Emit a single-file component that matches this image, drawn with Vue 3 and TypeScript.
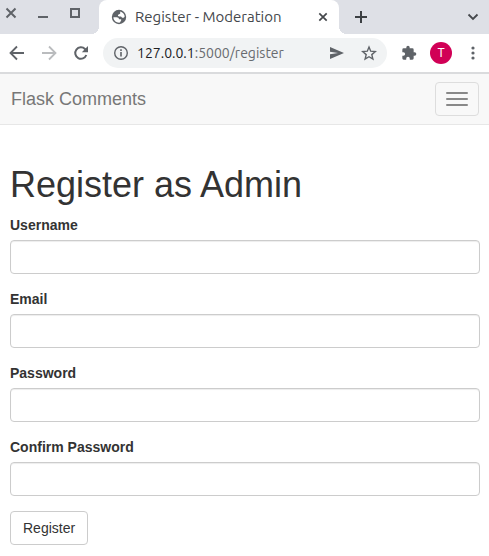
<script setup lang="ts">
import { reactive } from 'vue'

interface Field {
  id: 'username' | 'email' | 'password' | 'confirm'
  label: string
  type: string
}

const fields: Field[] = [
  { id: 'username', label: 'Username', type: 'text' },
  { id: 'email', label: 'Email', type: 'text' },
  { id: 'password', label: 'Password', type: 'password' },
  { id: 'confirm', label: 'Confirm Password', type: 'password' },
]

const form = reactive({ username: '', email: '', password: '', confirm: '' })
</script>

<template>
  <div class="browser">
    <header class="chrome">
      <div class="tab-strip">
        <div class="window-controls">
          <button class="icon-button" type="button">
            <svg width="12" height="12" viewBox="0 0 12 12"><path d="M1.5 1.5l9 9M10.5 1.5l-9 9" stroke="#5f6368" stroke-width="2" /></svg>
          </button>
          <button class="icon-button" type="button">
            <svg width="12" height="12" viewBox="0 0 12 12"><path d="M1 10h10" stroke="#5f6368" stroke-width="2" /></svg>
          </button>
          <button class="icon-button" type="button">
            <svg width="12" height="12" viewBox="0 0 12 12"><path d="M2 2h8v8H2z" fill="none" stroke="#5f6368" stroke-width="2" /></svg>
          </button>
        </div>
        <div class="tab">
          <svg width="16" height="16" viewBox="0 0 16 16">
            <circle cx="8" cy="8" r="7.2" fill="#5f6368" />
            <path d="M9.2 2.4c2.400.5 4.200 2.500 4.500 4.900-.3 1-1 1.500-1.800 1.500-1.200 0-1.300-1-2.100-1.300-.9-.3-2.200.2-2.700-.5-.5-.8.2-1.500 1-1.700.9-.2 1.200-.6 1.100-1.300z" fill="#fff" />
            <path d="M2.400 8.200h3.300c1.300 0 2.300.9 2.300 2.100h1.600c.6 0 .8.5.6 1l-1.200 2.300c-3.400.5-6.500-2-6.600-5.400z" fill="#fff" />
          </svg>
          <span class="tab-title">Register - Moderation</span>
          <button class="icon-button" type="button">
            <svg width="12" height="12" viewBox="0 0 12 12"><path d="M2.3 2.3l7.4 7.4M9.7 2.3l-7.4 7.4" stroke="#45484c" stroke-width="1.7" /></svg>
          </button>
        </div>
        <button class="icon-button new-tab" type="button">
          <svg width="14" height="14" viewBox="0 0 14 14"><path d="M7 1v12M1 7h12" stroke="#3c4043" stroke-width="2" /></svg>
        </button>
        <button class="icon-button tab-search" type="button">
          <svg width="12" height="12" viewBox="0 0 12 12"><path d="M1.5 3.5L6 8l4.500-4.500" fill="none" stroke="#45484c" stroke-width="1.8" /></svg>
        </button>
      </div>

      <div class="toolbar">
        <nav class="history">
          <button class="icon-button" type="button">
            <svg width="16" height="16" viewBox="0 0 16 16"><path d="M15 8H2.500M8 1.500L1.500 8 8 14.500" fill="none" stroke="#5f6368" stroke-width="1.800" /></svg>
          </button>
          <button class="icon-button" type="button">
            <svg width="16" height="16" viewBox="0 0 16 16"><path d="M1 8h12.500M8 1.500L14.500 8 8 14.500" fill="none" stroke="#babcbe" stroke-width="1.800" /></svg>
          </button>
          <button class="icon-button" type="button">
            <svg width="16" height="16" viewBox="0 0 16 16"><path d="M13.300 10A5.700 5.700 0 1 1 12 4l1.500 1.500" fill="none" stroke="#5f6368" stroke-width="2" /><path d="M15 1v6.200H8.800z" fill="#5f6368" /></svg>
          </button>
        </nav>
        <div class="address">
          <svg width="16" height="16" viewBox="0 0 16 16">
            <circle cx="8" cy="8" r="6.300" fill="none" stroke="#5f6368" stroke-width="1.400" />
            <path d="M8 7v4.500M8 4.300v1.600" stroke="#5f6368" stroke-width="1.600" />
          </svg>
          <span class="url"><span class="host">127.0.0.1</span>:5000/register</span>
          <button class="icon-button" type="button">
            <svg width="16" height="16" viewBox="0 0 16 16"><path d="M1 2l14 6-14 6V9.300L9 8 1 6.700z" fill="#5f6368" /></svg>
          </button>
          <button class="icon-button" type="button">
            <svg width="16" height="16" viewBox="0 0 16 16"><path d="M8 2l1.700 4.200 4.600.4-3.500 3 1.100 4.500L8 11.700l-3.900 2.400 1.100-4.500-3.500-3 4.600-.4z" fill="none" stroke="#5f6368" stroke-width="1.400" /></svg>
          </button>
        </div>
        <div class="actions">
          <button class="icon-button" type="button">
            <svg width="16" height="16" viewBox="0 0 24 24"><path d="M20.500 11H19V7a2 2 0 0 0-2-2h-4V3.500a2.500 2.500 0 0 0-5 0V5H4a2 2 0 0 0-2 2v3.800h1.500a2.700 2.700 0 0 1 0 5.400H2V20a2 2 0 0 0 2 2h3.800v-1.500a2.700 2.700 0 0 1 5.400 0V22H17a2 2 0 0 0 2-2v-4h1.500a2.500 2.500 0 0 0 0-5z" fill="#5f6368" /></svg>
          </button>
          <button class="avatar" type="button">T</button>
          <button class="icon-button" type="button">
            <svg width="16" height="16" viewBox="0 0 16 16" fill="#5f6368"><circle cx="8" cy="3" r="1.600" /><circle cx="8" cy="8" r="1.600" /><circle cx="8" cy="13" r="1.600" /></svg>
          </button>
        </div>
      </div>
    </header>

    <div class="navbar">
      <a class="brand" href="#">Flask Comments</a>
      <button class="menu-toggle" type="button">
        <span class="bar"></span>
        <span class="bar"></span>
        <span class="bar"></span>
      </button>
    </div>

    <main class="page">
      <h1>Register as Admin</h1>
      <form @submit.prevent>
        <div v-for="field in fields" :key="field.id" class="form-group">
          <label :for="field.id">{{ field.label }}</label>
          <input :id="field.id" v-model="form[field.id]" :type="field.type" />
        </div>
        <button class="submit" type="submit">Register</button>
      </form>
    </main>
  </div>
</template>

<style>
body {
  margin: 0;
  background: #fff;
}
</style>

<style scoped>
* {
  box-sizing: border-box;
}

.browser {
  color: #333;
  font: 14px/20px "Liberation Sans", Arial, sans-serif;
}

button {
  font: inherit;
}

svg {
  display: block;
  flex: none;
}

.icon-button {
  padding: 0;
  border: 0;
  background: none;
}

.chrome {
  border-bottom: 2px solid #dadbdd;
  font-family: Ubuntu, "Noto Sans", sans-serif;
}

.tab-strip {
  display: flex;
  align-items: center;
  height: 34px;
  padding-right: 10px;
  background: #dee0e6;
}

.window-controls {
  display: flex;
  flex: none;
  gap: 20px;
  width: 99px;
  height: 34px;
  padding: 7px 0 0 5px;
  align-items: flex-start;
}

.tab {
  position: relative;
  display: flex;
  flex: 0 1 240px;
  align-items: center;
  gap: 8px;
  height: 34px;
  padding: 0 10px 0 12px;
  border-radius: 8px 8px 0 0;
  background: #fff;
}

.tab::before,
.tab::after {
  content: "";
  position: absolute;
  bottom: 0;
  width: 8px;
  height: 8px;
}

.tab::before {
  right: 100%;
  background: radial-gradient(circle at 0 0, #dee0e6 8px, #fff 8px);
}

.tab::after {
  left: 100%;
  background: radial-gradient(circle at 100% 0, #dee0e6 8px, #fff 8px);
}

.tab-title {
  flex: 1;
  overflow: hidden;
  color: #45484c;
  font-size: 15px;
  white-space: nowrap;
}

.new-tab {
  margin-left: 15px;
}

.tab-search {
  margin-left: auto;
}

.toolbar {
  display: flex;
  align-items: center;
  height: 38px;
  padding: 0 8px 0 9px;
}

.history {
  display: flex;
  gap: 16px;
  margin-right: 14px;
}

.address {
  display: flex;
  flex: 1;
  align-items: center;
  gap: 16px;
  height: 30px;
  padding: 0 10px;
  border-radius: 15px;
  background: #f1f3f4;
}

.url {
  flex: 1;
  margin-left: -8px;
  color: #686b6f;
  font-size: 14px;
}

.host {
  color: #202124;
}

.actions {
  display: flex;
  align-items: center;
  gap: 13px;
  margin-left: 14px;
}

.avatar {
  width: 22px;
  height: 22px;
  padding: 0;
  border: 0;
  border-radius: 50%;
  background: #d10056;
  color: #fff;
  font: 12px/22px Roboto, sans-serif;
  text-align: center;
}

.navbar {
  display: flex;
  align-items: center;
  justify-content: space-between;
  height: 51px;
  padding: 0 10px 0 11px;
  border-bottom: 1px solid #e7e7e7;
  background: #f8f8f8;
}

.brand {
  color: #777;
  font-size: 18px;
  text-decoration: none;
}

.menu-toggle {
  display: grid;
  gap: 4px;
  padding: 9px 10px;
  border: 1px solid #ddd;
  border-radius: 4px;
  background: transparent;
}

.bar {
  width: 22px;
  height: 2px;
  border-radius: 1px;
  background: #888;
}

.page {
  padding: 40px 9px 11px 10px;
}

h1 {
  margin: 0 0 10px;
  font-size: 36px;
  font-weight: 500;
  line-height: 40px;
}

.form-group {
  margin-bottom: 15px;
}

label {
  display: block;
  margin-bottom: 5px;
  font-weight: 700;
}

input {
  display: block;
  width: 100%;
  height: 34px;
  padding: 6px 12px;
  border: 1px solid #ccc;
  border-radius: 4px;
  background: #fff;
  box-shadow: inset 0 1px 1px rgba(0, 0, 0, 0.075);
  color: #555;
  font: inherit;
}

.submit {
  padding: 6px 12px;
  border: 1px solid #ccc;
  border-radius: 4px;
  background: #fff;
  color: #333;
}
</style>
